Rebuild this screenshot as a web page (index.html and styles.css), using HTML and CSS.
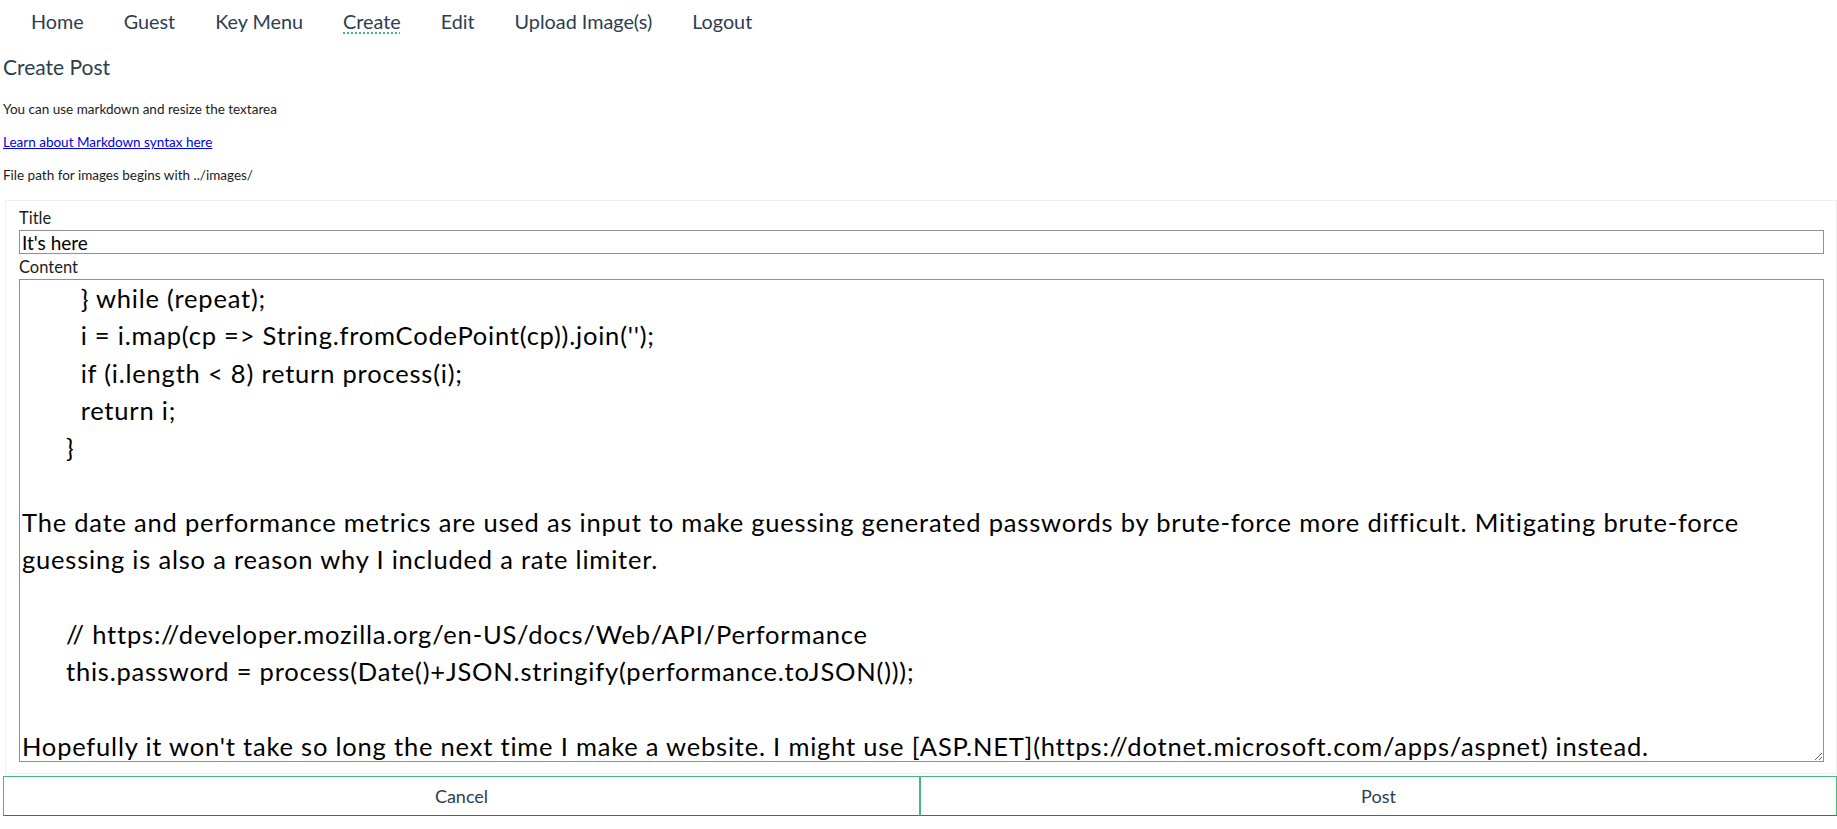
FILE: index.html
```html
<!DOCTYPE html>
<html lang="en">
<head>
<meta charset="utf-8">
<title>Create Post</title>
<link rel="stylesheet" href="styles.css">
</head>
<body>
<nav class="nav">
  <a class="nav-item" href="#">Home</a>
  <a class="nav-item" href="#">Guest</a>
  <a class="nav-item" href="#">Key Menu</a>
  <a class="nav-item active" href="#">Create</a>
  <a class="nav-item" href="#">Edit</a>
  <a class="nav-item" href="#">Upload Image(s)</a>
  <a class="nav-item" href="#">Logout</a>
</nav>
<main class="page">
  <h3 class="page-title">Create Post</h3>
  <p class="note note-first">You can use markdown and resize the textarea</p>
  <p class="note"><a class="md-link" href="#">Learn about Markdown syntax here</a></p>
  <p class="note">File path for images begins with ../images/</p>
  <form class="post-form">
    <label class="field-label" for="title">Title</label>
    <input class="title-input" id="title" type="text" value="It's here">
    <label class="field-label content-label" for="content">Content</label>
    <textarea class="content-input" id="content" spellcheck="false">        } while (repeat);
        i = i.map(cp =&gt; String.fromCodePoint(cp)).join('');
        if (i.length &lt; 8) return process(i);
        return i;
      }

The date and performance metrics are used as input to make guessing generated passwords by brute-force more difficult. Mitigating brute-force guessing is also a reason why I included a rate limiter.

      // https://developer.mozilla.org/en-US/docs/Web/API/Performance
      this.password = process(Date()+JSON.stringify(performance.toJSON()));

Hopefully it won't take so long the next time I make a website. I might use [ASP.NET](https://dotnet.microsoft.com/apps/aspnet) instead.</textarea>
  </form>
  <div class="actions">
    <button class="action-btn" type="button">Cancel</button>
    <button class="action-btn" type="button">Post</button>
  </div>
</main>
</body>
</html>
```
FILE: styles.css
```css
html, body {
  margin: 0;
  padding: 0;
  background: #fff;
  overflow: hidden;
}

body {
  font-family: Lato, "Open Sans", sans-serif;
  color: #2c3e50;
}

.nav {
  display: flex;
  padding-left: 11px;
  height: 43px;
  line-height: 43px;
  font-size: 19.8px;
}

.nav-item {
  padding: 0 20px;
  color: #2c3e50;
  text-decoration: none;
}

.nav-item.active {
  text-decoration-line: underline;
  text-decoration-style: dotted;
  text-decoration-color: #42b983;
  text-decoration-thickness: 2px;
  text-underline-offset: 3px;
}

.page {
  padding-left: 3px;
}

.page-title {
  margin: 11px 0 0;
  font-size: 21px;
  line-height: 25px;
  font-weight: 400;
  color: #2c3e50;
}

.note {
  margin: 16px 0 0;
  font-size: 13.5px;
  line-height: 17px;
  color: #1c1c1c;
}

.note-first {
  margin-top: 22px;
}

.md-link {
  color: #0000ee;
}

.post-form {
  display: flex;
  flex-direction: column;
  margin: 16px 0 0 2px;
  padding: 8px 12px 11px 13px;
  border: 1px solid #efefef;
  color: #1c1c1c;
}

.field-label {
  font-size: 16.5px;
  line-height: 18px;
  margin-bottom: 3px;
}

.content-label {
  margin-top: 4px;
}

.title-input {
  box-sizing: border-box;
  height: 24px;
  margin: 0;
  padding: 0 2px;
  border: 1px solid #8f8f9d;
  border-radius: 0;
  font-family: Lato, "Open Sans", sans-serif;
  font-size: 19px;
  color: #000;
  outline: none;
}

.content-input {
  box-sizing: border-box;
  height: 483px;
  margin: 0;
  padding: 0 2px;
  border: 1px solid #8f8f9d;
  border-radius: 0;
  font-family: Lato, "Open Sans", sans-serif;
  font-size: 25.5px;
  letter-spacing: 0.8px;
  line-height: 37.3px;
  color: #000;
  overflow: hidden;
  resize: both;
  outline: none;
}

.actions {
  display: flex;
  margin-top: 2px;
}

.action-btn {
  flex: 1 1 0;
  height: 40px;
  margin: 0;
  background: #fff;
  border: 1px solid #42b983;
  border-bottom-color: #2f7a5c;
  border-radius: 0;
  font-family: Lato, "Open Sans", sans-serif;
  font-size: 18px;
  color: #2c3e50;
}
```
